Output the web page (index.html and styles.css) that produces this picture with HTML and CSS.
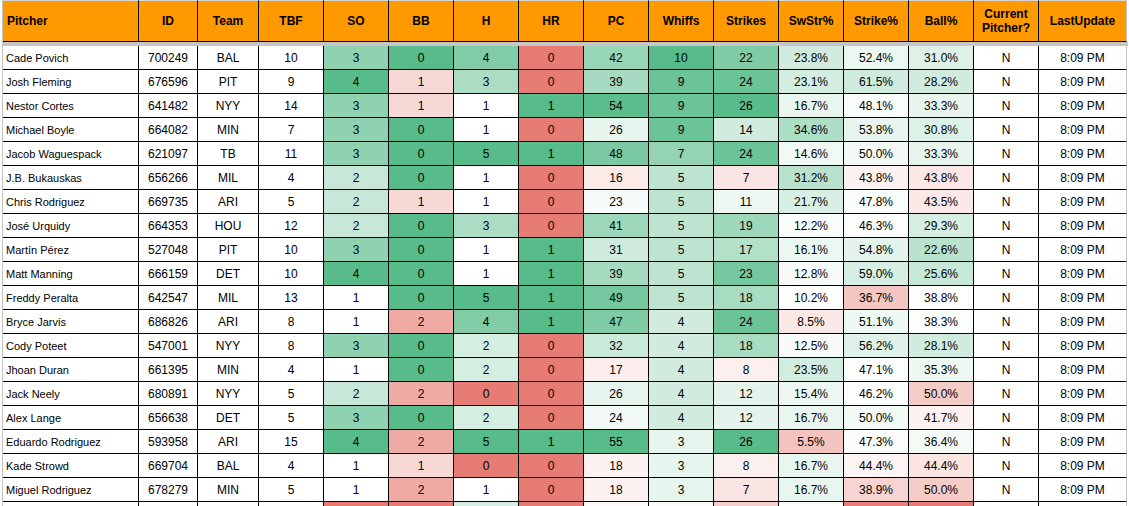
FILE: index.html
```html
<!DOCTYPE html>
<html lang="en">
<head>
<meta charset="utf-8">
<title>Pitchers</title>
<link rel="stylesheet" href="styles.css">
</head>
<body>
<div class="sheet" role="table">
  <div class="row head" role="row">
    <div class="c name">Pitcher</div><div class="c">ID</div><div class="c">Team</div><div class="c">TBF</div><div class="c">SO</div><div class="c">BB</div><div class="c">H</div><div class="c">HR</div><div class="c">PC</div><div class="c">Whiffs</div><div class="c">Strikes</div><div class="c">SwStr%</div><div class="c">Strike%</div><div class="c">Ball%</div><div class="c">Current Pitcher?</div><div class="c last">LastUpdate</div>
  </div>
  <div class="bar"></div>
  <div class="body">
    <div class="row"><div class="c name">Cade Povich</div><div class="c">700249</div><div class="c">BAL</div><div class="c">10</div><div class="c">3</div><div class="c">0</div><div class="c">4</div><div class="c">0</div><div class="c">42</div><div class="c">10</div><div class="c">22</div><div class="c">23.8%</div><div class="c">52.4%</div><div class="c">31.0%</div><div class="c">N</div><div class="c last">8:09 PM</div></div>
    <div class="row"><div class="c name">Josh Fleming</div><div class="c">676596</div><div class="c">PIT</div><div class="c">9</div><div class="c">4</div><div class="c">1</div><div class="c">3</div><div class="c">0</div><div class="c">39</div><div class="c">9</div><div class="c">24</div><div class="c">23.1%</div><div class="c">61.5%</div><div class="c">28.2%</div><div class="c">N</div><div class="c last">8:09 PM</div></div>
    <div class="row"><div class="c name">Nestor Cortes</div><div class="c">641482</div><div class="c">NYY</div><div class="c">14</div><div class="c">3</div><div class="c">1</div><div class="c">1</div><div class="c">1</div><div class="c">54</div><div class="c">9</div><div class="c">26</div><div class="c">16.7%</div><div class="c">48.1%</div><div class="c">33.3%</div><div class="c">N</div><div class="c last">8:09 PM</div></div>
    <div class="row"><div class="c name">Michael Boyle</div><div class="c">664082</div><div class="c">MIN</div><div class="c">7</div><div class="c">3</div><div class="c">0</div><div class="c">1</div><div class="c">0</div><div class="c">26</div><div class="c">9</div><div class="c">14</div><div class="c">34.6%</div><div class="c">53.8%</div><div class="c">30.8%</div><div class="c">N</div><div class="c last">8:09 PM</div></div>
    <div class="row"><div class="c name">Jacob Waguespack</div><div class="c">621097</div><div class="c">TB</div><div class="c">11</div><div class="c">3</div><div class="c">0</div><div class="c">5</div><div class="c">1</div><div class="c">48</div><div class="c">7</div><div class="c">24</div><div class="c">14.6%</div><div class="c">50.0%</div><div class="c">33.3%</div><div class="c">N</div><div class="c last">8:09 PM</div></div>
    <div class="row"><div class="c name">J.B. Bukauskas</div><div class="c">656266</div><div class="c">MIL</div><div class="c">4</div><div class="c">2</div><div class="c">0</div><div class="c">1</div><div class="c">0</div><div class="c">16</div><div class="c">5</div><div class="c">7</div><div class="c">31.2%</div><div class="c">43.8%</div><div class="c">43.8%</div><div class="c">N</div><div class="c last">8:09 PM</div></div>
    <div class="row"><div class="c name">Chris Rodriguez</div><div class="c">669735</div><div class="c">ARI</div><div class="c">5</div><div class="c">2</div><div class="c">1</div><div class="c">1</div><div class="c">0</div><div class="c">23</div><div class="c">5</div><div class="c">11</div><div class="c">21.7%</div><div class="c">47.8%</div><div class="c">43.5%</div><div class="c">N</div><div class="c last">8:09 PM</div></div>
    <div class="row"><div class="c name">José Urquidy</div><div class="c">664353</div><div class="c">HOU</div><div class="c">12</div><div class="c">2</div><div class="c">0</div><div class="c">3</div><div class="c">0</div><div class="c">41</div><div class="c">5</div><div class="c">19</div><div class="c">12.2%</div><div class="c">46.3%</div><div class="c">29.3%</div><div class="c">N</div><div class="c last">8:09 PM</div></div>
    <div class="row"><div class="c name">Martín Pérez</div><div class="c">527048</div><div class="c">PIT</div><div class="c">10</div><div class="c">3</div><div class="c">0</div><div class="c">1</div><div class="c">1</div><div class="c">31</div><div class="c">5</div><div class="c">17</div><div class="c">16.1%</div><div class="c">54.8%</div><div class="c">22.6%</div><div class="c">N</div><div class="c last">8:09 PM</div></div>
    <div class="row"><div class="c name">Matt Manning</div><div class="c">666159</div><div class="c">DET</div><div class="c">10</div><div class="c">4</div><div class="c">0</div><div class="c">1</div><div class="c">1</div><div class="c">39</div><div class="c">5</div><div class="c">23</div><div class="c">12.8%</div><div class="c">59.0%</div><div class="c">25.6%</div><div class="c">N</div><div class="c last">8:09 PM</div></div>
    <div class="row"><div class="c name">Freddy Peralta</div><div class="c">642547</div><div class="c">MIL</div><div class="c">13</div><div class="c">1</div><div class="c">0</div><div class="c">5</div><div class="c">1</div><div class="c">49</div><div class="c">5</div><div class="c">18</div><div class="c">10.2%</div><div class="c">36.7%</div><div class="c">38.8%</div><div class="c">N</div><div class="c last">8:09 PM</div></div>
    <div class="row"><div class="c name">Bryce Jarvis</div><div class="c">686826</div><div class="c">ARI</div><div class="c">8</div><div class="c">1</div><div class="c">2</div><div class="c">4</div><div class="c">1</div><div class="c">47</div><div class="c">4</div><div class="c">24</div><div class="c">8.5%</div><div class="c">51.1%</div><div class="c">38.3%</div><div class="c">N</div><div class="c last">8:09 PM</div></div>
    <div class="row"><div class="c name">Cody Poteet</div><div class="c">547001</div><div class="c">NYY</div><div class="c">8</div><div class="c">3</div><div class="c">0</div><div class="c">2</div><div class="c">0</div><div class="c">32</div><div class="c">4</div><div class="c">18</div><div class="c">12.5%</div><div class="c">56.2%</div><div class="c">28.1%</div><div class="c">N</div><div class="c last">8:09 PM</div></div>
    <div class="row"><div class="c name">Jhoan Duran</div><div class="c">661395</div><div class="c">MIN</div><div class="c">4</div><div class="c">1</div><div class="c">0</div><div class="c">2</div><div class="c">0</div><div class="c">17</div><div class="c">4</div><div class="c">8</div><div class="c">23.5%</div><div class="c">47.1%</div><div class="c">35.3%</div><div class="c">N</div><div class="c last">8:09 PM</div></div>
    <div class="row"><div class="c name">Jack Neely</div><div class="c">680891</div><div class="c">NYY</div><div class="c">5</div><div class="c">2</div><div class="c">2</div><div class="c">0</div><div class="c">0</div><div class="c">26</div><div class="c">4</div><div class="c">12</div><div class="c">15.4%</div><div class="c">46.2%</div><div class="c">50.0%</div><div class="c">N</div><div class="c last">8:09 PM</div></div>
    <div class="row"><div class="c name">Alex Lange</div><div class="c">656638</div><div class="c">DET</div><div class="c">5</div><div class="c">3</div><div class="c">0</div><div class="c">2</div><div class="c">0</div><div class="c">24</div><div class="c">4</div><div class="c">12</div><div class="c">16.7%</div><div class="c">50.0%</div><div class="c">41.7%</div><div class="c">N</div><div class="c last">8:09 PM</div></div>
    <div class="row"><div class="c name">Eduardo Rodriguez</div><div class="c">593958</div><div class="c">ARI</div><div class="c">15</div><div class="c">4</div><div class="c">2</div><div class="c">5</div><div class="c">1</div><div class="c">55</div><div class="c">3</div><div class="c">26</div><div class="c">5.5%</div><div class="c">47.3%</div><div class="c">36.4%</div><div class="c">N</div><div class="c last">8:09 PM</div></div>
    <div class="row"><div class="c name">Kade Strowd</div><div class="c">669704</div><div class="c">BAL</div><div class="c">4</div><div class="c">1</div><div class="c">1</div><div class="c">0</div><div class="c">0</div><div class="c">18</div><div class="c">3</div><div class="c">8</div><div class="c">16.7%</div><div class="c">44.4%</div><div class="c">44.4%</div><div class="c">N</div><div class="c last">8:09 PM</div></div>
    <div class="row"><div class="c name">Miguel Rodriguez</div><div class="c">678279</div><div class="c">MIN</div><div class="c">5</div><div class="c">1</div><div class="c">2</div><div class="c">1</div><div class="c">0</div><div class="c">18</div><div class="c">3</div><div class="c">7</div><div class="c">16.7%</div><div class="c">38.9%</div><div class="c">50.0%</div><div class="c">N</div><div class="c last">8:09 PM</div></div>
    <div class="row stub" aria-hidden="true"><div class="c name"></div><div class="c"></div><div class="c"></div><div class="c"></div><div class="c" data-v="0"></div><div class="c" data-v="3"></div><div class="c" data-v="2"></div><div class="c" data-v="0"></div><div class="c" data-v="20"></div><div class="c" data-v="2"></div><div class="c" data-v="5"></div><div class="c" data-v="10"></div><div class="c" data-v="25"></div><div class="c" data-v="75"></div><div class="c"></div><div class="c last"></div></div>
  </div>
</div>
<script src="script.js"></script>
</body>
</html>
```

FILE: styles.css
```css
html, body {
  margin: 0;
  padding: 0;
  background: #ffffff;
}

body {
  font-family: "Liberation Sans", Arial, sans-serif;
  color: #000000;
}

.sheet {
  margin-left: 2px;
  width: 1125px;
  border-left: 1px solid #c3c3c3;
}

.row {
  display: grid;
  grid-template-columns: 136px 59px 61px repeat(12, 65px) 88px;
}

.c {
  box-sizing: border-box;
  height: 24px;
  border-right: 1px solid #000000;
  border-bottom: 1px solid #000000;
  display: flex;
  align-items: center;
  justify-content: center;
  text-align: center;
  font-size: 12px;
  line-height: 14px;
  white-space: nowrap;
  overflow: hidden;
}

.c.last {
  border-right-color: #c3c3c3;
}

.c.name {
  justify-content: flex-start;
  text-align: left;
  padding-left: 3px;
  font-size: 11px;
}

.head .c {
  height: 42px;
  background: #ff9900;
  border-top: 1px solid #d6d6d6;
  font-weight: bold;
  font-size: 12px;
  white-space: normal;
}

.head .c.name {
  padding-left: 4px;
}

.bar {
  height: 4px;
  background: #c6c6c6;
}
```

FILE: script.js
```js
// Google Sheets style colour scales: [low, mid, high, direction]
// 'g' -> high value green, low value red; 'r' -> high value red, low value green
var RED = [230, 124, 115];
var GREEN = [87, 187, 138];
var SCALES = {
  4: [0, 1, 4, 'g'],
  5: [0, 0.15, 3, 'r'],
  6: [0, 1, 5, 'g'],
  7: [0, 0.5, 1, 'g'],
  8: [-10, 21, 55, 'g'],
  9: [0, 1.75, 10, 'g'],
  10: [-2, 9.3, 26, 'g'],
  11: [0, 10.2, 60, 'g'],
  12: [24.5, 46, 100, 'g'],
  13: [0, 38.9, 66.6, 'r']
};

function mix(col, t) {
  t = Math.max(0, Math.min(1, t));
  var out = [];
  for (var i = 0; i < 3; i++) {
    out.push(Math.round(255 + (col[i] - 255) * t));
  }
  return 'rgb(' + out.join(',') + ')';
}

var rows = document.querySelectorAll('.body .row');
rows.forEach(function (row) {
  var cells = row.children;
  Object.keys(SCALES).forEach(function (k) {
    var s = SCALES[k];
    var cell = cells[k];
    var raw = cell.dataset.v !== undefined ? cell.dataset.v : cell.textContent;
    var v = parseFloat(raw);
    if (isNaN(v)) return;
    var highCol = s[3] === 'g' ? GREEN : RED;
    var lowCol = s[3] === 'g' ? RED : GREEN;
    var color;
    if (v >= s[1]) {
      color = mix(highCol, (v - s[1]) / (s[2] - s[1]));
    } else {
      color = mix(lowCol, (s[1] - v) / (s[1] - s[0]));
    }
    cell.style.background = color;
  });
});
```
